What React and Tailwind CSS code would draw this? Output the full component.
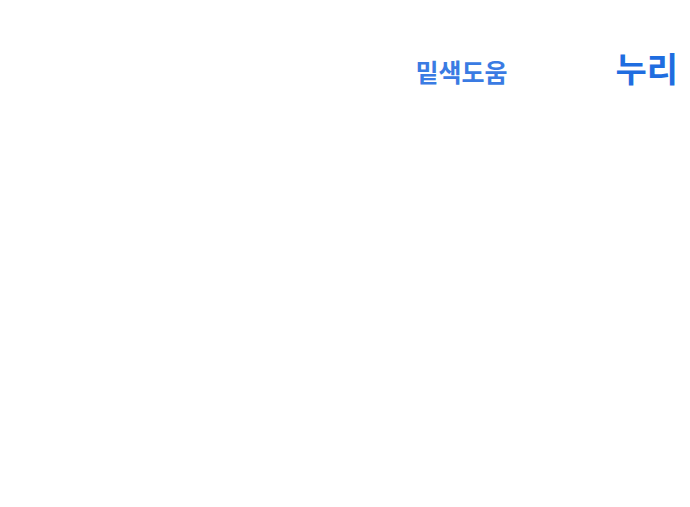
export default function App() {
  return (
    <div
      className="w-[690px] h-[507px] bg-white"
      style={{ fontFamily: '"Noto Sans CJK KR", "Noto Sans", sans-serif' }}
    >
      <header className="flex items-end justify-end gap-[108px] pt-[51px] pr-[12px]">
        <span className="text-[25px] leading-none font-semibold text-[#3a7be3] mb-[1px]">
          밑색도움
        </span>
        <span className="text-[34px] leading-none font-bold text-[#1f6de0]">
          누리
        </span>
      </header>
    </div>
  );
}
